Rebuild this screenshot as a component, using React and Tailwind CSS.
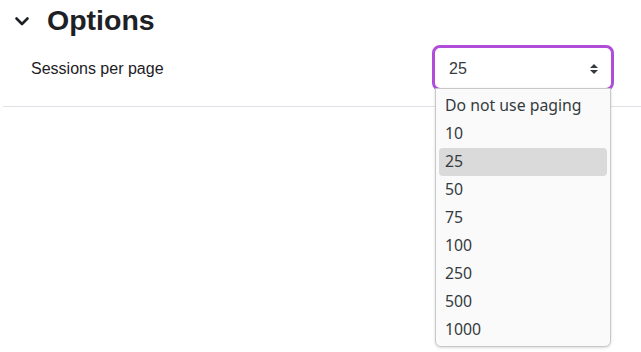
import React from "react";

const options = ["Do not use paging", "10", "25", "50", "75", "100", "250", "500", "1000"];

export default function App() {
  return (
    <div className="relative w-[641px] h-[352px] bg-white overflow-hidden" style={{ fontFamily: '"Liberation Sans", Arial, sans-serif' }}>
      <div className="flex items-center pl-[14px] pt-[3px] h-[38px]">
        <svg width="16" height="16" viewBox="0 0 16 16" className="text-[#1d2125]">
          <path d="M2.5 5.5 L8 11 L13.5 5.5" fill="none" stroke="currentColor" strokeWidth="2.6" strokeLinecap="round" strokeLinejoin="round" />
        </svg>
        <h3 className="ml-[17px] text-[28.5px] font-bold text-[#1d2125] leading-none">Options</h3>
      </div>

      <div className="flex items-start mt-[7px]">
        <div className="pl-[31px] pt-[12px] w-[432px] text-[16px] text-[#1d2125]">Sessions per page</div>
        <div className="relative">
          <div className="w-[182px] h-[46px] border-[3px] border-[#b04dd8] rounded-[8px] flex items-center justify-between pl-[14px] pr-[12px] pt-px text-[16px] text-[#343a40]">
            <span>25</span>
            <svg width="10" height="14" viewBox="0 0 10 14">
              <path d="M1 6 L5 2 L9 6 Z" fill="#343a40" />
              <path d="M1 8 L5 12 L9 8 Z" fill="#343a40" />
            </svg>
          </div>
        </div>
      </div>

      <div className="mt-[15px] ml-[3px] h-px bg-[#dee2e6]" />

      <div
        className="absolute left-[435px] top-[88px] w-[176px] bg-[#fafafa] border border-[#c8c8c8] rounded-b-[6px] shadow-[0_1px_3px_rgba(0,0,0,0.15)] px-[3px] pt-[3px] pb-[2px] text-[15.8px] text-[#343a40]"
        style={{ fontFamily: '"Noto Sans", "Open Sans", sans-serif' }}
      >
        {options.map((o) => (
          <div
            key={o}
            className={`h-[28px] flex items-center pl-[6px] rounded-[4px] ${o === "25" ? "bg-[#dadada]" : ""}`}
          >
            {o}
          </div>
        ))}
      </div>
    </div>
  );
}
